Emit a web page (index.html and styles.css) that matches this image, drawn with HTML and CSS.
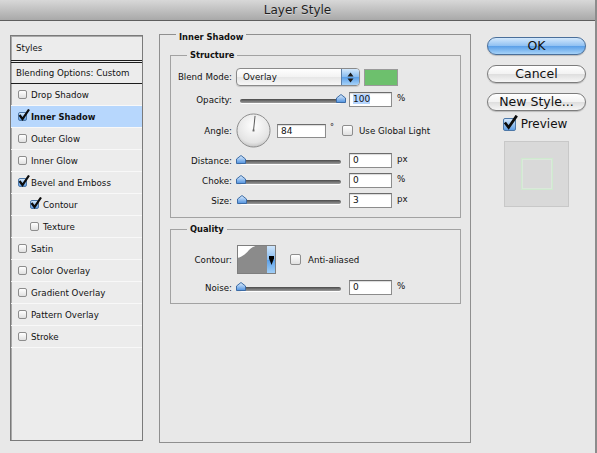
FILE: index.html
```html
<!DOCTYPE html>
<html lang="en">
<head>
    <meta charset="UTF-8">
    <title>Layer Style</title>
    <link rel="stylesheet" href="styles.css">
</head>
<body>

<div class="window">
    <div class="titlebar">Layer Style</div>

    <div class="content">
        <!-- liste des styles -->
        <div class="styles-list">
            <div class="list-head">Styles</div>
            <div class="list-blend">Blending Options: Custom</div>
            <div class="item"><span class="check"></span>Drop Shadow</div>
            <div class="item selected"><span class="check on"><svg class="tick" viewBox="0 0 12 12"><path d="M1.5 6 L4.5 10 L11 0.5"/></svg></span>Inner Shadow</div>
            <div class="item"><span class="check"></span>Outer Glow</div>
            <div class="item"><span class="check"></span>Inner Glow</div>
            <div class="item"><span class="check on"><svg class="tick" viewBox="0 0 12 12"><path d="M1.5 6 L4.5 10 L11 0.5"/></svg></span>Bevel and Emboss</div>
            <div class="item sub"><span class="check on"><svg class="tick" viewBox="0 0 12 12"><path d="M1.5 6 L4.5 10 L11 0.5"/></svg></span>Contour</div>
            <div class="item sub"><span class="check"></span>Texture</div>
            <div class="item"><span class="check"></span>Satin</div>
            <div class="item"><span class="check"></span>Color Overlay</div>
            <div class="item"><span class="check"></span>Gradient Overlay</div>
            <div class="item"><span class="check"></span>Pattern Overlay</div>
            <div class="item"><span class="check"></span>Stroke</div>
        </div>

        <!-- panneau central -->
        <fieldset class="group main">
            <legend>Inner Shadow</legend>

            <fieldset class="group structure">
                <legend>Structure</legend>

                <div class="row row-blend">
                    <label>Blend Mode:</label>
                    <div class="select">
                        <span class="select-text">Overlay</span>
                        <span class="select-arrows">
                            <svg width="7" height="11" viewBox="0 0 7 11"><path d="M0.5 4.5 L3.5 0.5 L6.5 4.5 Z M0.5 6.5 L3.5 10.5 L6.5 6.5 Z" fill="#1a1a1a"/></svg>
                        </span>
                    </div>
                    <div class="swatch"></div>
                </div>

                <div class="row row-opacity">
                    <label>Opacity:</label>
                    <div class="slider">
                        <div class="track"></div>
                        <svg class="thumb max" viewBox="0 0 10 9">
                            <defs>
                                <linearGradient id="thumbg" x1="0" y1="0" x2="0" y2="1">
                                    <stop offset="0" stop-color="#e3f0fd"/>
                                    <stop offset="1" stop-color="#4f92e0"/>
                                </linearGradient>
                                <linearGradient id="blueg" x1="0" y1="0" x2="0" y2="1">
                                    <stop offset="0" stop-color="#d3e8fc"/>
                                    <stop offset="0.5" stop-color="#86bbf0"/>
                                    <stop offset="0.51" stop-color="#5a9fe8"/>
                                    <stop offset="1" stop-color="#a6d2f8"/>
                                </linearGradient>
                                <radialGradient id="dialg" cx="50%" cy="35%" r="65%">
                                    <stop offset="0" stop-color="#ffffff"/>
                                    <stop offset="0.8" stop-color="#e4e4e4"/>
                                    <stop offset="1" stop-color="#c4c4c4"/>
                                </radialGradient>
                            </defs>
                            <path d="M0.5 4 L5 0.5 L9.5 4 V8.5 H0.5 Z" fill="url(#thumbg)" stroke="#3d6ca6"/>
                        </svg>
                    </div>
                    <div class="field"><span class="sel">100</span></div>
                    <span class="unit">%</span>
                </div>

                <div class="row row-angle">
                    <label>Angle:</label>
                    <svg class="dial" width="35" height="35" viewBox="0 0 36 36">
                        <circle cx="18" cy="18" r="17" fill="url(#dialg)" stroke="#8a8a8a"/>
                        <line x1="18" y1="18" x2="19.6" y2="3" stroke="#555" stroke-width="1"/>
                        <rect x="17" y="17" width="2" height="2" fill="#6a6a6a"/>
                    </svg>
                    <div class="field wide">84</div>
                    <span class="degree">°</span>
                    <span class="check mid"></span>
                    <span class="check-label">Use Global Light</span>
                </div>

                <div class="row">
                    <label>Distance:</label>
                    <div class="slider">
                        <div class="track"></div>
                        <svg class="thumb" viewBox="0 0 10 9"><path d="M0.5 4 L5 0.5 L9.5 4 V8.5 H0.5 Z" fill="url(#thumbg)" stroke="#3d6ca6"/></svg>
                    </div>
                    <div class="field">0</div>
                    <span class="unit">px</span>
                </div>

                <div class="row">
                    <label>Choke:</label>
                    <div class="slider">
                        <div class="track"></div>
                        <svg class="thumb" viewBox="0 0 10 9"><path d="M0.5 4 L5 0.5 L9.5 4 V8.5 H0.5 Z" fill="url(#thumbg)" stroke="#3d6ca6"/></svg>
                    </div>
                    <div class="field">0</div>
                    <span class="unit">%</span>
                </div>

                <div class="row">
                    <label>Size:</label>
                    <div class="slider">
                        <div class="track"></div>
                        <svg class="thumb low" viewBox="0 0 10 9"><path d="M0.5 4 L5 0.5 L9.5 4 V8.5 H0.5 Z" fill="url(#thumbg)" stroke="#3d6ca6"/></svg>
                    </div>
                    <div class="field">3</div>
                    <span class="unit">px</span>
                </div>
            </fieldset>

            <fieldset class="group quality">
                <legend>Quality</legend>

                <div class="row row-contour">
                    <label>Contour:</label>
                    <svg class="contour" width="39" height="29" viewBox="0 0 39 29">
                        <rect width="39" height="29" fill="#ffffff"/>
                        <path d="M0 29 V13 C5 12 9 9 12 5 C15 2 18 1 21 0 H30 V29 Z" fill="#8b8b8b"/>
                        <rect x="30" width="9" height="29" fill="url(#blueg)"/>
                        <path d="M32 11 H37 V13.5 L34.5 20 L32 13.5 Z" fill="#000"/>
                        <rect x="0.5" y="0.5" width="38" height="28" fill="none" stroke="#7e7e7e"/>
                    </svg>
                    <span class="check mid aa"></span>
                    <span class="check-label">Anti-aliased</span>
                </div>

                <div class="row row-noise">
                    <label>Noise:</label>
                    <div class="slider">
                        <div class="track"></div>
                        <svg class="thumb" viewBox="0 0 10 9"><path d="M0.5 4 L5 0.5 L9.5 4 V8.5 H0.5 Z" fill="url(#thumbg)" stroke="#3d6ca6"/></svg>
                    </div>
                    <div class="field">0</div>
                    <span class="unit">%</span>
                </div>
            </fieldset>
        </fieldset>

        <!-- boutons -->
        <div class="actions">
            <button class="btn primary">OK</button>
            <button class="btn">Cancel</button>
            <button class="btn">New Style...</button>
            <div class="preview-check">
                <span class="check big on"><svg class="tick" viewBox="0 0 12 12"><path d="M1.5 6 L4.5 10 L11 0.5"/></svg></span>
                Preview
            </div>
            <div class="preview">
                <div class="preview-square"></div>
            </div>
        </div>
    </div>
</div>

</body>
</html>
```

FILE: styles.css
```css
body {
    margin: 0;
    background: #e8e8e8;
    font-family: "DejaVu Sans", sans-serif;
    font-size: 8.7px;
    color: #111;
}

.window {
    width: 597px;
    height: 453px;
    box-sizing: border-box;
    border-right: 2px solid #8c8c8c;
    display: flex;
    flex-direction: column;
    overflow: hidden;
}

.titlebar {
    height: 20px;
    line-height: 21px;
    text-align: center;
    font-size: 12px;
    color: #1e1e1e;
    background: linear-gradient(#d8d8d8, #a9a9a9);
    border-bottom: 1px solid #5e5e5e;
    text-shadow: 0 1px 0 rgba(255, 255, 255, 0.4);
}

.content {
    display: flex;
    align-items: flex-start;
    padding-left: 10px;
}

/* Liste de gauche */
.styles-list {
    width: 133px;
    height: 406px;
    box-sizing: border-box;
    margin-top: 14px;
    border: 1px solid #7a7a7a;
    box-shadow: inset 1px 0 0 #a9a9a9, inset 0 1px 0 #a9a9a9;
    background: #ececec;
}

.list-head {
    height: 24px;
    line-height: 24px;
    padding-left: 5px;
}

.list-blend {
    height: 20px;
    line-height: 20px;
    padding-left: 5px;
    border-top: 3px double #1c1c1c;
    border-bottom: 1px solid #1c1c1c;
}

.item {
    height: 21px;
    border-bottom: 1px solid #f8f8f8;
    display: flex;
    align-items: center;
    gap: 4px;
    padding-left: 7px;
}

.item.sub {
    padding-left: 19px;
}

.item.selected {
    background: #b7d7fd;
    font-weight: bold;
    font-size: 8.3px;
}

/* Cases a cocher */
.check {
    width: 9px;
    height: 9px;
    box-sizing: border-box;
    border: 1px solid #8d8d8d;
    border-radius: 2px;
    background: linear-gradient(#ffffff, #e0e0e0);
    position: relative;
    flex: none;
}

.check.on {
    background: linear-gradient(#d4e8fc, #5f9ee5);
    border-color: #4d78a8;
}

.tick {
    position: absolute;
    left: -1px;
    top: -4px;
    width: 12px;
    height: 12px;
    fill: none;
    stroke: #0c0c0c;
    stroke-width: 2.2;
}

.check.mid {
    width: 11px;
    height: 11px;
}

.check.big {
    width: 13px;
    height: 13px;
}

.check.big .tick {
    width: 15px;
    height: 15px;
    left: -1px;
    top: -4px;
}

/* Groupes */
.group {
    margin: 0;
    padding: 0;
    border: 1px solid #8f8f8f;
    min-width: 0;
    box-sizing: border-box;
}

.group legend {
    font-weight: bold;
    font-size: 8.3px;
    line-height: 11px;
    padding: 0 3px;
    margin-left: 16px;
}

.group.main {
    width: 312px;
    height: 417px;
    margin: 5px 0 0 16px;
}

.group.main > legend {
    padding-top: 6px;
}

.group.structure,
.group.quality {
    border-color: #a2a2a2;
    margin: 7px 9px 0 10px;
}

.group.structure {
    padding: 7px 0 9px 0;
    display: flex;
    flex-direction: column;
    gap: 5px;
}

.group.quality {
    margin-top: 6px;
    padding: 10px 0 8px 0;
    display: flex;
    flex-direction: column;
    gap: 6px;
}

.row {
    display: flex;
    align-items: center;
    height: 15px;
}

.row label {
    width: 61px;
    margin-right: 4px;
    text-align: right;
    flex: none;
}

.row-blend {
    height: 18px;
}

.row-opacity {
    height: 17px;
}

.row-angle {
    height: 35px;
}

.row-contour {
    height: 29px;
}

/* Menu deroulant */
.select {
    width: 124px;
    height: 18px;
    box-sizing: border-box;
    border: 1px solid #8a8a8a;
    border-radius: 4px;
    background: linear-gradient(#ffffff, #f3f3f3 50%, #e6e6e6 51%, #f7f7f7);
    display: flex;
    align-items: center;
    overflow: hidden;
    box-shadow: 0 1px 1px rgba(0, 0, 0, 0.15);
}

.select-text {
    flex: 1;
    padding-left: 6px;
}

.select-arrows {
    width: 17px;
    align-self: stretch;
    background: linear-gradient(#d3e8fc, #86bbf0 50%, #5a9fe8 51%, #a6d2f8);
    border-left: 1px solid #5b7fa8;
    display: flex;
    align-items: center;
    justify-content: center;
}

.swatch {
    width: 34px;
    height: 17px;
    box-sizing: border-box;
    margin-left: 4px;
    border: 1px solid #9a9a9a;
    background: #6dc06d;
}

/* Curseurs */
.slider {
    position: relative;
    width: 110px;
    height: 15px;
    flex: none;
}

.track {
    position: absolute;
    left: 4px;
    right: 5px;
    top: 7px;
    height: 4px;
    border-radius: 2px;
    background: linear-gradient(#4a4a4a, #9c9c9c);
    box-shadow: 0 1px 0 #ffffff;
}

.thumb {
    position: absolute;
    top: 2px;
    left: 0;
    width: 10px;
    height: 9px;
}

.thumb.max {
    left: 100px;
}

.thumb.low {
    left: 1px;
}

.field {
    width: 43px;
    height: 15px;
    box-sizing: border-box;
    margin-left: 3px;
    padding-left: 3px;
    border: 1px solid #8c8c8c;
    border-top-color: #6c6c6c;
    background: #ffffff;
    box-shadow: inset 0 1px 1px rgba(0, 0, 0, 0.15);
    font-size: 9px;
    line-height: 13px;
    flex: none;
}

.field.wide {
    width: 49px;
    height: 14px;
    line-height: 12px;
    margin-left: 6px;
}

.sel {
    background: #b5d5fe;
}

.unit {
    margin-left: 5px;
    margin-top: -3px;
}

.degree {
    margin-left: 4px;
    margin-top: -6px;
    font-size: 8px;
}

.row-angle .check {
    margin-left: 8px;
}

.check-label {
    margin-left: 6px;
}

.dial {
    flex: none;
}

.contour {
    margin-left: 1px;
    flex: none;
}

.check.aa {
    margin-left: 14px;
}

.row-contour .check-label {
    margin-left: 7px;
}

/* Colonne de droite */
.actions {
    width: 99px;
    margin: 16px 0 0 16px;
    display: flex;
    flex-direction: column;
    align-items: center;
}

.btn {
    width: 99px;
    height: 18px;
    padding: 0;
    margin-bottom: 10px;
    border: 1px solid #7c7c7c;
    border-radius: 9px;
    background: linear-gradient(#ffffff, #f2f2f2 50%, #dedede 51%, #f6f6f6);
    box-shadow: 0 1px 1px rgba(0, 0, 0, 0.2);
    font-family: "DejaVu Sans", sans-serif;
    font-size: 12.5px;
    line-height: 16px;
    color: #111;
}

.btn.primary {
    background: linear-gradient(#d3e8fc, #8fc0f2 50%, #5a9fe8 51%, #a6d2f8);
    border-color: #4a6f9a;
}

.preview-check {
    display: flex;
    align-items: center;
    gap: 5px;
    font-size: 12px;
    margin-top: -4px;
    margin-left: -3px;
}

.preview {
    width: 65px;
    height: 66px;
    box-sizing: border-box;
    margin-top: 10px;
    border: 1px solid #c8c8c8;
    background: #d9d9d9;
    display: flex;
    align-items: center;
    justify-content: center;
}

.preview-square {
    width: 32px;
    height: 32px;
    box-sizing: border-box;
    border: 1px solid #cfe9cf;
    box-shadow: inset 0 0 0 1px #dbe8db;
}
```
